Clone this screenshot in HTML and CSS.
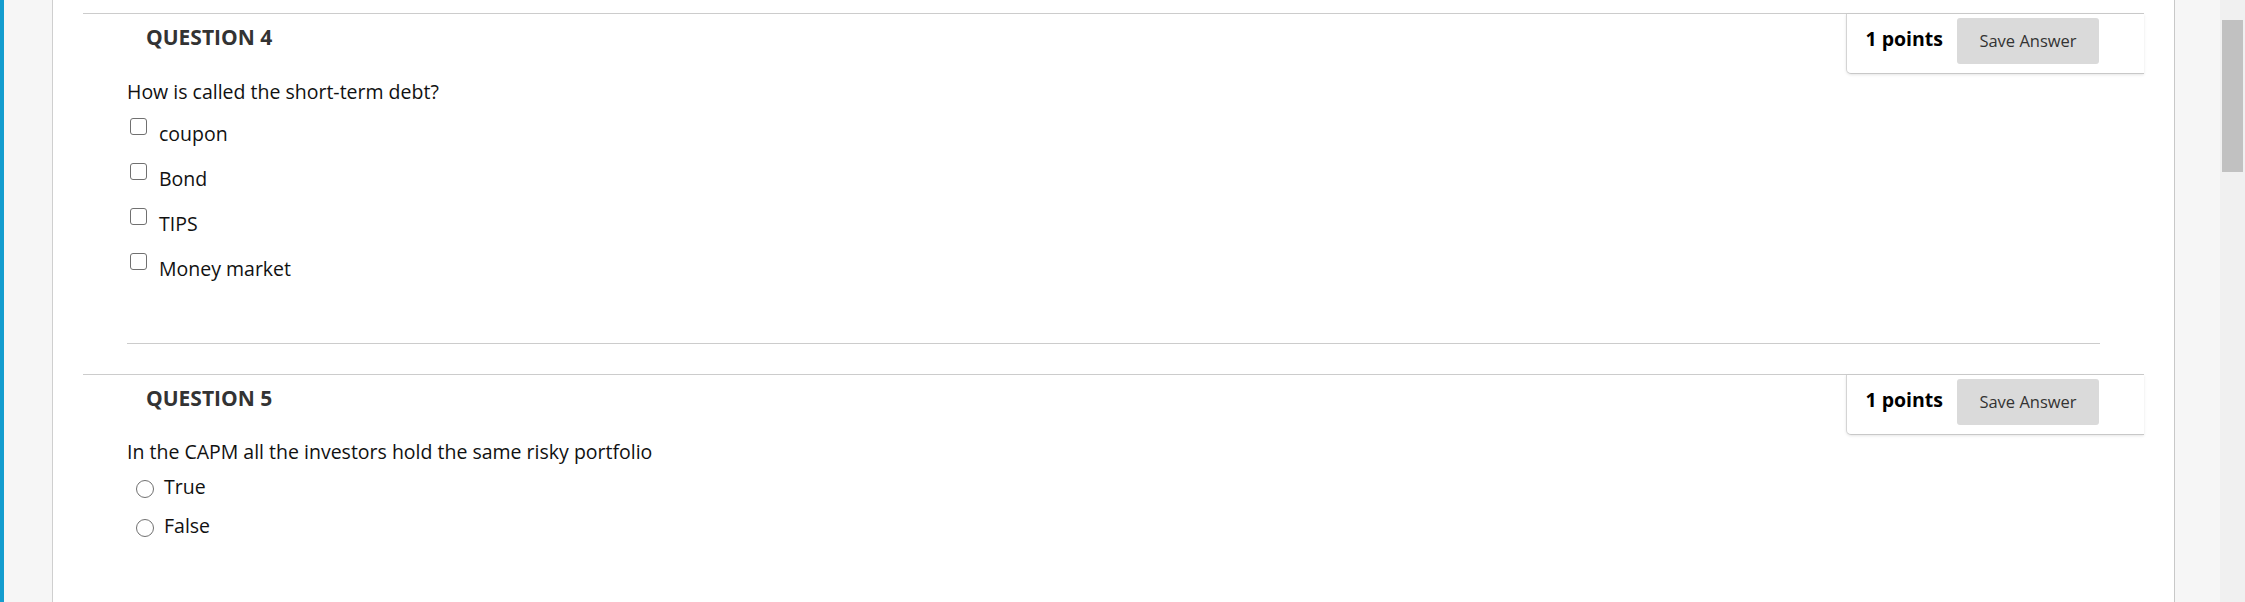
FILE: index.html
```html
<!DOCTYPE html>
<html lang="en">
<head>
  <meta charset="UTF-8">
  <title>Test</title>
  <link rel="stylesheet" href="styles.css">
</head>
<body>

  <div class="page">
    <div class="edge"></div>
    <div class="gutter left"></div>

    <main class="content">

      <div class="question">
        <div class="q-head">
          <h3 class="q-title">QUESTION 4</h3>
          <div class="q-points">
            <span class="pts">1 points</span>
            <button class="save">Save Answer</button>
          </div>
        </div>
        <div class="q-body">
          <p class="q-text">How is called the short-term debt?</p>
          <ul class="answers multi">
            <li><input type="checkbox" id="q4a"><label for="q4a">coupon</label></li>
            <li><input type="checkbox" id="q4b"><label for="q4b">Bond</label></li>
            <li><input type="checkbox" id="q4c"><label for="q4c">TIPS</label></li>
            <li><input type="checkbox" id="q4d"><label for="q4d">Money market</label></li>
          </ul>
          <hr class="divider">
        </div>
      </div>

      <div class="question">
        <div class="q-head">
          <h3 class="q-title">QUESTION 5</h3>
          <div class="q-points">
            <span class="pts">1 points</span>
            <button class="save">Save Answer</button>
          </div>
        </div>
        <div class="q-body">
          <p class="q-text">In the CAPM all the investors hold the same risky portfolio</p>
          <ul class="answers single">
            <li><input type="radio" name="q5" id="q5a"><label for="q5a">True</label></li>
            <li><input type="radio" name="q5" id="q5b"><label for="q5b">False</label></li>
          </ul>
        </div>
      </div>

    </main>

    <div class="gutter right"></div>
    <div class="scrollbar"><div class="thumb"></div></div>
  </div>

</body>
</html>
```

FILE: styles.css
```css
body {
  margin: 0;
  padding: 0;
  height: 100vh;
  overflow: hidden;
  font-family: 'Open Sans', 'Liberation Sans', sans-serif;
  color: #111;
  background-color: #fff;
}

.page {
  display: flex;
  height: 100vh;
}

.edge {
  width: 4px;
  background-color: #149dcf;
}

.gutter {
  width: 48px;
  background-color: #f6f6f6;
}

.gutter.left {
  border-right: 1px solid #cfcfcf;
}

.gutter.right {
  width: 45px;
  border-left: 1px solid #c8c8c8;
}

.scrollbar {
  width: 25px;
  background-color: #f0f0f0;
}

.thumb {
  margin: 20px 2px 0 2px;
  height: 152px;
  background-color: #c1c1c1;
}

.content {
  flex: 1;
  padding: 13px 30px 0;
  background-color: #fff;
}

.question {
  border-top: 1px solid #cccccc;
}

.question + .question {
  margin-top: 30px;
}

.q-head {
  display: flex;
  justify-content: space-between;
  align-items: flex-start;
}

.q-title {
  margin: 9px 0 0 63px;
  font-size: 21px;
  line-height: 28px;
  font-weight: bold;
  color: #333;
}

.q-points {
  display: flex;
  align-items: flex-start;
  padding: 4px 45px 9px 18px;
  border-left: 1px solid #d4d4d4;
  border-bottom: 1px solid #c8c8c8;
  border-bottom-left-radius: 5px;
  background-color: #fff;
  box-shadow: 0 1px 3px rgba(0, 0, 0, 0.1);
}

.pts {
  margin-top: 7px;
  margin-right: 14px;
  font-size: 19.5px;
  line-height: 28px;
  font-weight: bold;
  color: #000;
}

.save {
  width: 142px;
  height: 46px;
  padding: 0;
  border: none;
  border-radius: 3px;
  background-color: #dadada;
  color: #333;
  font-family: 'Open Sans', 'Liberation Sans', sans-serif;
  font-size: 16.5px;
  line-height: 46px;
}

.q-body {
  padding: 3.5px 44px 0;
}

.q-text {
  margin: 0;
  font-size: 19.5px;
  line-height: 28px;
}

.answers {
  list-style: none;
  margin: 14px 0 0;
  padding: 0;
}

.answers li {
  display: flex;
  align-items: flex-start;
  margin-bottom: 17px;
}

.answers li:last-child {
  margin-bottom: 0;
}

.answers label {
  font-size: 19.5px;
  line-height: 28px;
}

.answers input {
  appearance: none;
  -webkit-appearance: none;
  flex: none;
  background-color: #fff;
  border: 1.5px solid #707070;
}

.multi input {
  width: 17px;
  height: 17px;
  margin: -2px 12px 0 3px;
  border-radius: 3px;
}

.single {
  margin-top: 7px;
}

.single li {
  margin-bottom: 11px;
}

.single input {
  width: 18px;
  height: 18px;
  margin: 7px 10px 0 9px;
  border-radius: 50%;
}

.divider {
  margin: 60px 0 0;
  border: none;
  border-top: 1px solid #cccccc;
  height: 0;
}
```
